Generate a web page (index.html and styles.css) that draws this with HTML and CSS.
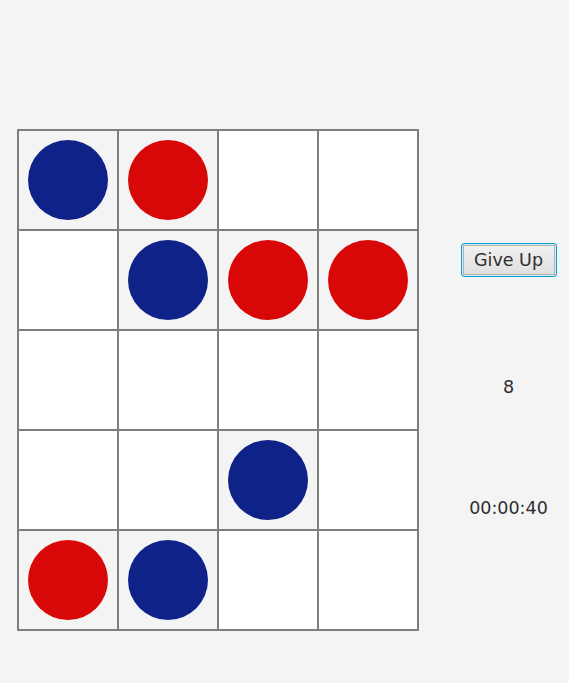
FILE: index.html
```html
<!DOCTYPE html>
<html>
<head>
<meta charset="utf-8">
<link rel="stylesheet" href="styles.css">
</head>
<body>
<div class="app">
  <div class="board">
    <div class="cell filled"><span class="disc blue"></span></div>
    <div class="cell filled"><span class="disc red"></span></div>
    <div class="cell"></div>
    <div class="cell"></div>

    <div class="cell"></div>
    <div class="cell filled"><span class="disc blue"></span></div>
    <div class="cell filled"><span class="disc red"></span></div>
    <div class="cell filled"><span class="disc red"></span></div>

    <div class="cell"></div>
    <div class="cell"></div>
    <div class="cell"></div>
    <div class="cell"></div>

    <div class="cell"></div>
    <div class="cell"></div>
    <div class="cell filled"><span class="disc blue"></span></div>
    <div class="cell"></div>

    <div class="cell filled"><span class="disc red"></span></div>
    <div class="cell filled"><span class="disc blue"></span></div>
    <div class="cell"></div>
    <div class="cell"></div>
  </div>
  <div class="side">
    <button class="give-up">Give Up</button>
    <div class="moves">8</div>
    <div class="timer">00:00:40</div>
  </div>
</div>
</body>
</html>
```

FILE: styles.css
```css
html, body {
  margin: 0;
  padding: 0;
  background: #f4f4f4;
  width: 569px;
  height: 683px;
  overflow: hidden;
  font-family: "DejaVu Sans", sans-serif;
  color: #2e2e2e;
}

.app {
  display: flex;
  flex-direction: row;
  padding-top: 129px;
  padding-left: 17px;
}

.board {
  display: grid;
  grid-template-columns: repeat(4, 98px);
  grid-template-rows: repeat(5, 98px);
  gap: 2px;
  padding: 2px;
  background: #7e7e7e;
  align-self: flex-start;
}

.cell {
  background: #ffffff;
  display: flex;
  align-items: center;
  justify-content: center;
}

.cell.filled {
  background: #f4f4f4;
}

.disc {
  width: 80px;
  height: 80px;
  border-radius: 50%;
  display: block;
}

.disc.blue { background: #0f2287; }
.disc.red { background: #d90808; }

.side {
  width: 121px;
  margin-left: 29px;
  display: flex;
  flex-direction: column;
  align-items: center;
  padding-top: 114px;
}

.give-up {
  font-family: "DejaVu Sans", sans-serif;
  font-size: 17.5px;
  color: #2e2e2e;
  height: 34px;
  width: 96px;
  padding: 0;
  border: 1px solid #0a9ed6;
  border-radius: 3px;
  box-shadow: inset 0 0 0 1px #d8eef7, inset 0 0 0 2px #b0b0b0;
  background: linear-gradient(#f2f2f2, #dedede);
  line-height: 30px;
}

.moves {
  font-size: 17.5px;
  line-height: 20px;
  margin-top: 100px;
}

.timer {
  font-size: 17.5px;
  line-height: 20px;
  margin-top: 101px;
}
```
